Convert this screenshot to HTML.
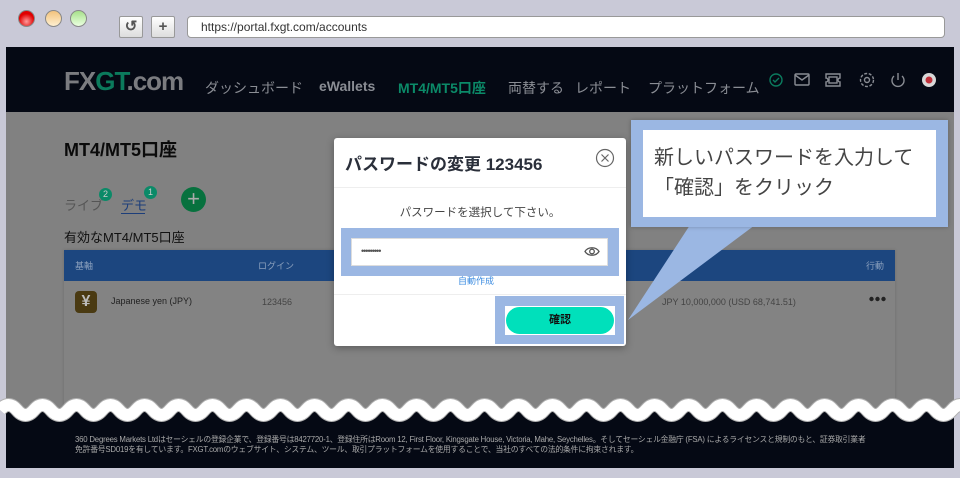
<!DOCTYPE html>
<html><head><meta charset="utf-8"><style>
*{margin:0;padding:0;box-sizing:border-box}
body{width:960px;height:478px;overflow:hidden;background:#c9c9d7;font-family:"Liberation Sans","Noto Sans CJK JP",sans-serif;position:relative}
.abs{position:absolute}
.dot{position:absolute;top:10px;width:17px;height:17px;border-radius:50%;border:1px solid #888}
.btn{position:absolute;top:16px;width:24px;height:22px;background:linear-gradient(#fff,#ddd);border:1px solid #999;border-radius:2px;font-size:15px;color:#555;text-align:center;line-height:20px;font-weight:bold}
.url{position:absolute;left:187px;top:16px;width:758px;height:22px;background:#fff;border:1px solid #999;border-radius:4px;font-size:12px;color:#333;padding-left:13px;line-height:20px}
.hdr{left:6px;top:47px;width:948px;height:65px;background:#050914}
.nav{position:absolute;top:78px;font-size:14px;color:#8a8d94;white-space:nowrap}
.main{left:6px;top:112px;width:948px;height:300px;background:#818181}
.foot{left:6px;top:412px;width:948px;height:56px;background:#050914}
</style></head><body>
<div class="dot" style="left:18px;background:radial-gradient(circle at 50% 70%,#ff9a9a,#e00000 60%)"></div>
<div class="dot" style="left:45px;background:linear-gradient(#f2c27c,#fff0d0)"></div>
<div class="dot" style="left:70px;background:linear-gradient(#a6e08a,#eaffe0)"></div>
<div class="btn" style="left:119px">↺</div>
<div class="btn" style="left:151px">+</div>
<div class="url">https://portal.fxgt.com/accounts</div>

<div class="abs hdr"></div>
<div class="abs" style="left:64px;top:66px;font-size:26px;font-weight:bold;letter-spacing:-1px;color:#7b7c80">FX<span style="color:#0b7a5c">GT</span>.com</div>
<div class="nav" style="left:205px">ダッシュボード</div>
<div class="nav" style="left:319px;font-weight:bold">eWallets</div>
<div class="nav" style="left:398px;color:#0b8a68;font-weight:bold">MT4/MT5口座</div>
<div class="nav" style="left:508px">両替する</div>
<div class="nav" style="left:575px">レポート</div>
<div class="nav" style="left:648px">プラットフォーム</div>
<svg class="abs" style="left:766px;top:70px" width="180" height="20" fill="none" stroke="#8a8d94" stroke-width="1.4">
<circle cx="10" cy="10" r="6" stroke="#0b7a5e"/><path d="M7 10l2 2 4-4" stroke="#0b7a5e"/>
<rect x="29" y="4" width="14" height="11" rx="1"/><path d="M29 5l7 5 7-5"/>
<path d="M60 4h14v4a2 2 0 0 0 0 4v4H60v-4a2 2 0 0 0 0-4z"/><rect x="63" y="7" width="8" height="6"/>
<circle cx="101" cy="10" r="2.5"/><circle cx="101" cy="10" r="6.5" stroke-dasharray="3 1.6"/>
<path d="M132 3v7"/><path d="M128 6a6 6 0 1 0 8 0"/>
<circle cx="163" cy="10" r="7" fill="#d8d8d8" stroke="none"/><circle cx="163" cy="10" r="3.5" fill="#c0303a" stroke="none"/>
</svg>

<div class="abs main"></div>
<div class="abs" style="left:64px;top:136px;font-size:18px;font-weight:bold;color:#0a0a0a">MT4/MT5口座</div>
<div class="abs" style="left:64px;top:195px;font-size:13px;color:#555">ライブ</div>
<div class="abs" style="left:99px;top:188px;width:13px;height:13px;border-radius:50%;background:#0b8a68;color:#ccc;font-size:9px;text-align:center;line-height:13px">2</div>
<div class="abs" style="left:121px;top:195px;font-size:13px;color:#1d3e7a">デモ</div>
<div class="abs" style="left:121px;top:213px;width:24px;height:1px;background:#1d3e7a"></div>
<div class="abs" style="left:144px;top:186px;width:13px;height:13px;border-radius:50%;background:#0b8a68;color:#ccc;font-size:9px;text-align:center;line-height:13px">1</div>
<div class="abs" style="left:181px;top:187px;width:25px;height:25px;border-radius:50%;background:#07713e;color:#aaa;font-size:22px;text-align:center;line-height:24px">+</div>
<div class="abs" style="left:64px;top:227px;font-size:13px;color:#111">有効なMT4/MT5口座</div>
<div class="abs" style="left:64px;top:250px;width:831px;height:160px;background:#838383;box-shadow:0 0 3px rgba(0,0,0,.15)"></div>
<div class="abs" style="left:64px;top:250px;width:831px;height:31px;background:#1c467f"></div>
<div class="abs" style="left:75px;top:259px;font-size:9px;color:#8ba0bd">基軸</div>
<div class="abs" style="left:258px;top:259px;font-size:9px;color:#8ba0bd">ログイン</div>
<div class="abs" style="left:866px;top:259px;font-size:9px;color:#8ba0bd">行動</div>
<div class="abs" style="left:75px;top:291px;width:22px;height:22px;border-radius:4px;background:#4a3a12;color:#bbb;font-size:16px;font-weight:bold;text-align:center;line-height:22px">¥</div>
<div class="abs" style="left:111px;top:296px;font-size:9px;color:#222">Japanese yen (JPY)</div>
<div class="abs" style="left:262px;top:297px;font-size:9px;color:#444">123456</div>
<div class="abs" style="left:662px;top:297px;font-size:9px;color:#444">JPY 10,000,000 (USD 68,741.51)</div>
<svg class="abs" style="left:869px;top:296px" width="18" height="6" fill="#222"><circle cx="2.5" cy="3" r="2.2"/><circle cx="8.5" cy="3" r="2.2"/><circle cx="14.5" cy="3" r="2.2"/></svg>

<div class="abs" style="left:334px;top:138px;width:292px;height:208px;background:#fff;border-radius:3px;box-shadow:0 2px 8px rgba(0,0,0,.3)"></div>
<div class="abs" style="left:345px;top:150px;font-size:17px;font-weight:bold;color:#2a2f3a">パスワードの変更 123456</div>
<svg class="abs" style="left:595px;top:148px" width="20" height="20" fill="none" stroke="#666" stroke-width="1.2"><circle cx="10" cy="10" r="8.5"/><path d="M6.5 6.5l7 7M13.5 6.5l-7 7"/></svg>
<div class="abs" style="left:334px;top:187px;width:292px;height:1px;background:#eee"></div>
<div class="abs" style="left:334px;top:204px;width:292px;text-align:center;font-size:11.5px;color:#444">パスワードを選択して下さい。</div>
<div class="abs" style="left:341px;top:228px;width:278px;height:48px;background:#9bb7e3"></div>
<div class="abs" style="left:351px;top:238px;width:257px;height:28px;background:#fff;border:1px solid #ddd;font-size:9px;color:#555;padding:7px 0 0 9px;letter-spacing:-1px">•••••••••</div>
<svg class="abs" style="left:584px;top:245px" width="16" height="13" fill="none" stroke="#555" stroke-width="1.3"><path d="M1 6.5C4 1.5 12 1.5 15 6.5 12 11.5 4 11.5 1 6.5z"/><circle cx="8" cy="6.5" r="2.3"/></svg>
<div class="abs" style="left:458px;top:274px;font-size:9px;color:#3b8be0">自動作成</div>
<div class="abs" style="left:334px;top:294px;width:292px;height:1px;background:#eee"></div>
<div class="abs" style="left:495px;top:296px;width:129px;height:48px;background:#9bb7e3"></div>
<div class="abs" style="left:505px;top:306px;width:110px;height:29px;background:#fff"></div>
<div class="abs" style="left:506px;top:307px;width:108px;height:27px;border-radius:14px;background:#00e0bb;color:#111;font-size:11px;font-weight:bold;text-align:center;line-height:27px">確認</div>

<svg class="abs" style="left:620px;top:220px" width="150" height="110"><path d="M70 5L135 5 8 100z" fill="#9bb7e3"/></svg>
<div class="abs" style="left:631px;top:120px;width:317px;height:107px;background:#9bb7e3;box-shadow:0 0 4px rgba(0,0,0,.25)"></div>
<div class="abs" style="left:643px;top:130px;width:293px;height:87px;background:#fff"></div>
<div class="abs" style="left:654px;top:143px;font-size:20px;line-height:30px;color:#444">新しいパスワードを入力して<br>「確認」をクリック</div>

<div class="abs foot"></div>
<svg class="abs" style="left:0;top:396px" width="960" height="32" fill="none">
<path d="M0 14 Q8.5 4 17 14 T34 14 T51 14 T68 14 T85 14 T102 14 T119 14 T136 14 T153 14 T170 14 T187 14 T204 14 T221 14 T238 14 T255 14 T272 14 T289 14 T306 14 T323 14 T340 14 T357 14 T374 14 T391 14 T408 14 T425 14 T442 14 T459 14 T476 14 T493 14 T510 14 T527 14 T544 14 T561 14 T578 14 T595 14 T612 14 T629 14 T646 14 T663 14 T680 14 T697 14 T714 14 T731 14 T748 14 T765 14 T782 14 T799 14 T816 14 T833 14 T850 14 T867 14 T884 14 T901 14 T918 14 T935 14 T952 14 T969 14" stroke="#b0b0b0" stroke-width="14"/>
<path d="M0 14 Q8.5 4 17 14 T34 14 T51 14 T68 14 T85 14 T102 14 T119 14 T136 14 T153 14 T170 14 T187 14 T204 14 T221 14 T238 14 T255 14 T272 14 T289 14 T306 14 T323 14 T340 14 T357 14 T374 14 T391 14 T408 14 T425 14 T442 14 T459 14 T476 14 T493 14 T510 14 T527 14 T544 14 T561 14 T578 14 T595 14 T612 14 T629 14 T646 14 T663 14 T680 14 T697 14 T714 14 T731 14 T748 14 T765 14 T782 14 T799 14 T816 14 T833 14 T850 14 T867 14 T884 14 T901 14 T918 14 T935 14 T952 14 T969 14" stroke="#fff" stroke-width="12"/>
</svg>
<div class="abs" style="left:75px;top:435px;width:830px;font-size:7.8px;line-height:10px;color:#aaa;white-space:nowrap;letter-spacing:-0.2px">360 Degrees Markets Ltdはセーシェルの登録企業で、登録番号は8427720-1、登録住所はRoom 12, First Floor, Kingsgate House, Victoria, Mahe, Seychelles。そしてセーシェル金融庁 (FSA) によるライセンスと規制のもと、証券取引業者<br>免許番号SD019を有しています。FXGT.comのウェブサイト、システム、ツール、取引プラットフォームを使用することで、当社のすべての法的条件に拘束されます。</div>
</body></html>
